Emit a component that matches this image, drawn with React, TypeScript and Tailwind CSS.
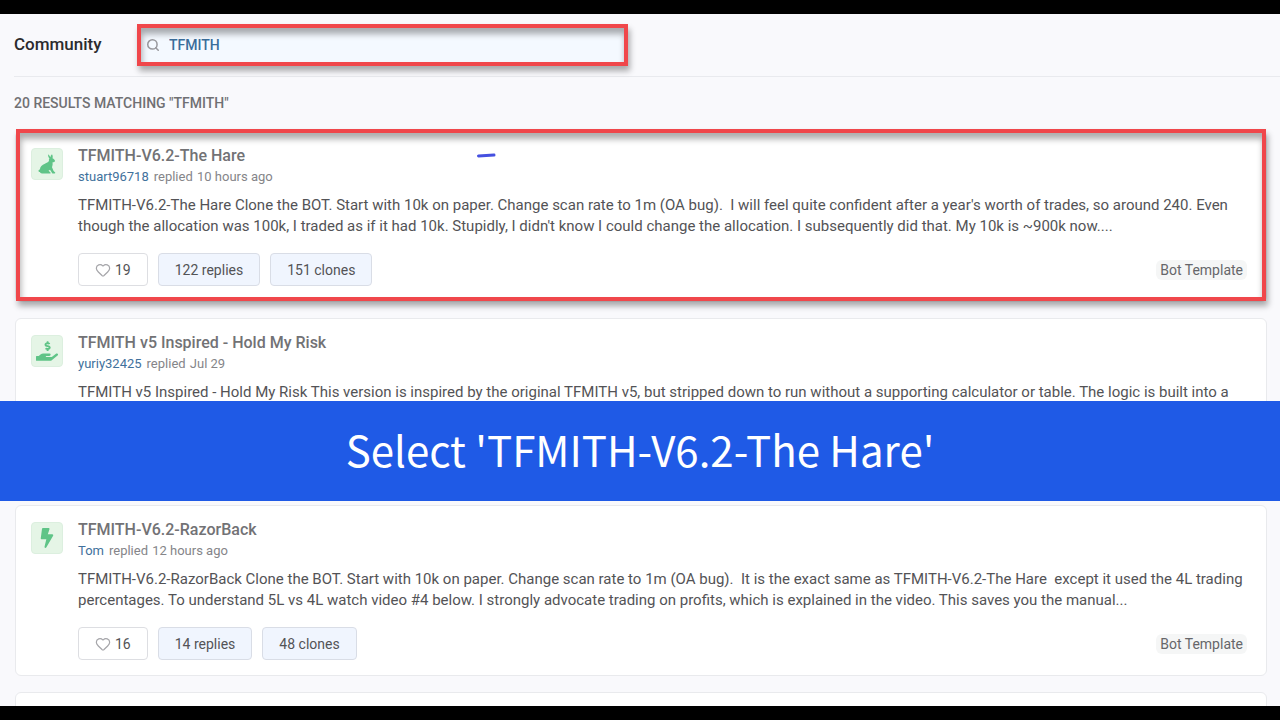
import type { ReactNode } from "react";
import { FaBolt, FaHandHoldingUsd } from "react-icons/fa";
import { Heart, Search } from "lucide-react";

type Post = {
  title: string;
  author: string;
  when: string;
  body: string;
  icon: ReactNode;
  stats?: { likes: number; replies: number; clones: number };
  highlighted?: boolean;
};

function HareIcon() {
  return (
    <svg viewBox="0 0 18 20" className="h-5 w-[18px]" fill="currentColor" aria-hidden="true">
      <path d="M10.2 0.2C11.3 1.1 12 2.2 12.3 3.3C12.5 2.1 13.1 1 14 0.3C14.8 1.7 14.9 3 14.5 4.3C15.9 4.9 16.8 5.9 17 6.9C16.9 7.8 15.8 8.2 14.6 8.3C14.8 10.1 14.6 11.7 14 13.2L15.6 17.1L17.2 18.5C17.4 19 17.1 19.4 16.6 19.4H14.4L12 15.7L10.5 16.8L12.5 18.4C12.8 19 12.5 19.4 12 19.4H4C2.8 19.4 2.2 18.9 1.9 18.1C0.8 18.1 0.3 17.4 0.5 16.6C0.8 16 1.3 15.7 1.9 15.6C2.1 12.5 4 10.7 6.9 9.7C8.8 9.1 10.2 8.3 11 7.1C10.7 6.2 10.8 5.3 11.4 4.5C10.4 3.2 9.9 1.7 10.2 0.2Z" />
    </svg>
  );
}

const posts: Post[] = [
  {
    title: "TFMITH-V6.2-The Hare",
    author: "stuart96718",
    when: "10 hours ago",
    body: "TFMITH-V6.2-The Hare Clone the BOT. Start with 10k on paper. Change scan rate to 1m (OA bug).\u00a0 I will feel quite confident after a year's worth of trades, so around 240. Even though the allocation was 100k, I traded as if it had 10k. Stupidly, I didn't know I could change the allocation. I subsequently did that. My 10k is ~900k now....",
    icon: <HareIcon />,
    stats: { likes: 19, replies: 122, clones: 151 },
    highlighted: true,
  },
  {
    title: "TFMITH v5 Inspired - Hold My Risk",
    author: "yuriy32425",
    when: "Jul 29",
    body: "TFMITH v5 Inspired - Hold My Risk This version is inspired by the original TFMITH v5, but stripped down to run without a supporting calculator or table. The logic is built into a",
    icon: <FaHandHoldingUsd className="h-[22px] w-[22px]" />,
  },
  {
    title: "TFMITH-V6.2-RazorBack",
    author: "Tom",
    when: "12 hours ago",
    body: "TFMITH-V6.2-RazorBack Clone the BOT. Start with 10k on paper. Change scan rate to 1m (OA bug).\u00a0 It is the exact same as TFMITH-V6.2-The Hare\u00a0 except it used the 4L trading percentages. To understand 5L vs 4L watch video #4 below. I strongly advocate trading on profits, which is explained in the video. This saves you the manual...",
    icon: <FaBolt className="h-5 w-[18px]" />,
    stats: { likes: 16, replies: 14, clones: 48 },
  },
];

const frame =
  "pointer-events-none absolute border-4 border-[#f0474b] shadow-[2px_5px_6px_rgba(0,0,0,0.32),inset_1px_6px_6px_rgba(0,0,0,0.32)]";

const statButton = "h-[33px] rounded border border-[#d9dde6] bg-[#f0f5fe] px-4";

function PostCard({ post }: { post: Post }) {
  return (
    <article className="relative flex min-h-[171px] gap-[15px] rounded-md border border-[#e9eaed] bg-white px-[15px] pt-4">
      <div className="flex h-8 w-8 shrink-0 items-center justify-center rounded border border-[#dcefdf] bg-[#e5f5e6] text-[#5fc487]">
        {post.icon}
      </div>
      <div className="min-w-0 flex-1">
        <h2 className="text-base leading-4 font-medium text-[#727275]">{post.title}</h2>
        <p className="pt-1 text-[13px] leading-[18px] text-[#858589]">
          <a href="#author" className="mr-[5px] text-[#41719c]">{post.author}</a>
          replied <span className="ml-px">{post.when}</span>
        </p>
        <p className="mt-[9px] text-[15px] leading-[21px] text-[#535356]">{post.body}</p>
        {post.stats && (
          <div className="mt-4 flex items-center gap-[10px] text-sm text-[#535356]">
            <button
              type="button"
              aria-label={`Like, ${post.stats.likes}`}
              className="flex h-[33px] items-center gap-1 rounded border border-[#dddee2] bg-white px-4"
            >
              <Heart className="h-4 w-4 text-[#a5a5a9]" strokeWidth={1.8} />
              {post.stats.likes}
            </button>
            <button type="button" className={statButton}>{post.stats.replies} replies</button>
            <button type="button" className={statButton}>{post.stats.clones} clones</button>
            <span className="mr-1 ml-auto rounded-md bg-[#f5f6f6] px-1 leading-5 text-[#66666a]">Bot Template</span>
          </div>
        )}
      </div>
      {post.highlighted && (
        <>
          <svg viewBox="0 0 20 6" className="absolute top-5 left-[460px] h-[6px] w-5" fill="none" aria-hidden="true">
            <path d="M2.5 4L18 3" stroke="#4550e0" strokeWidth="3" strokeLinecap="round" />
          </svg>
          <div className={`${frame} inset-x-0 -top-[3px] bottom-0`} />
        </>
      )}
    </article>
  );
}

export default function App() {
  return (
    <div className="flex h-screen flex-col overflow-hidden bg-black py-[14px] font-['Roboto',sans-serif]">
      <main className="relative min-h-0 flex-1 overflow-hidden bg-[#f9f9fc]">
        <header className="ml-[14px] flex h-[63px] items-center border-b border-[#e9eaee]">
          <h1 className="w-[123px] text-[17px] font-medium text-[#2b2b2e]">Community</h1>
          <label className="relative flex h-[42px] w-[491px] items-center gap-[9px] bg-[#f4f9ff] pl-[9px]">
            <Search className="h-[14px] w-[14px] text-[#98989d]" strokeWidth={2.6} />
            <input
              type="text"
              aria-label="Search community"
              defaultValue="TFMITH"
              className="min-w-0 flex-1 bg-transparent text-sm font-medium text-[#3a6d9a] outline-none"
            />
            <span className={`${frame} inset-0`} />
          </label>
        </header>
        <p className="pt-4 pl-[14px] text-sm leading-5 font-medium text-[#707073]">20 RESULTS MATCHING "TFMITH"</p>
        <section className="mt-[18px] mr-[13px] ml-[15px] flex flex-col gap-4">
          {posts.map((post) => (
            <PostCard key={post.title} post={post} />
          ))}
          <div className="h-[171px] rounded-md border border-[#e9eaed] bg-white" />
        </section>
        <div className="absolute inset-x-0 top-[387px] flex h-[100px] items-center justify-center bg-[#1f5ae6] pb-[5px] font-['Noto_Sans_CJK_SC',sans-serif] text-[42px] text-white">
          Select 'TFMITH-V6.2-The Hare'
        </div>
      </main>
    </div>
  );
}
